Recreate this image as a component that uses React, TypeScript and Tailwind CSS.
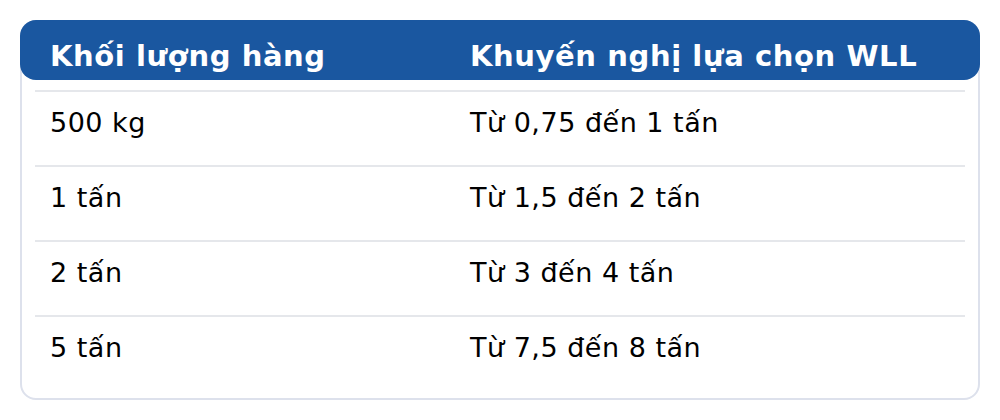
const rows: [string, string][] = [
  ['500 kg', 'Từ 0,75 đến 1 tấn'],
  ['1 tấn', 'Từ 1,5 đến 2 tấn'],
  ['2 tấn', 'Từ 3 đến 4 tấn'],
  ['5 tấn', 'Từ 7,5 đến 8 tấn'],
];

export default function App() {
  return (
    <div className="w-[1000px] h-[420px] bg-white p-[20px] font-['DejaVu_Sans',sans-serif]">
      <div className="h-[380px] border-2 border-[#dde1ec] rounded-2xl">
        {/* Header */}
        <div className="-mx-[2px] -mt-[2px] h-[60px] bg-[#1a57a0] rounded-2xl grid grid-cols-[420px_1fr] items-center pl-[30px] pt-[14px] text-white font-bold text-[29px] tracking-[0.6px]">
          <div>Khối lượng hàng</div>
          <div>Khuyến nghị lựa chọn WLL</div>
        </div>
        <div className="mx-[13px] mt-[10px]">
          {rows.map(([w, wll]) => (
            <div key={w} className="h-[75px] border-t-2 border-[#e5e7eb] grid grid-cols-[420px_1fr] pt-[11px] text-[27px] tracking-[0.5px] text-black">
              <div className="pl-[15px]">{w}</div>
              <div className="pl-[15px]">{wll}</div>
            </div>
          ))}
        </div>
      </div>
    </div>
  );
}
